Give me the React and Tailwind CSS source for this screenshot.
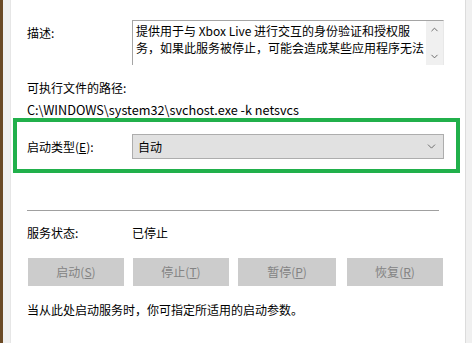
import { ChevronDown, ChevronUp } from 'lucide-react'

const FONT = { fontFamily: '"Segoe UI", "Noto Sans CJK SC", "Noto Sans", sans-serif' }

function Btn({ label, k, width }) {
  return (
    <div className={`h-[28px] ${width} bg-[#cccccc] text-[#838383] text-[12px] flex items-center justify-center`}>
      {label}(<span className="underline">{k}</span>)
    </div>
  )
}

export default function App() {
  return (
    <div className="w-[472px] h-[343px] flex bg-white overflow-hidden text-[12px] text-black" style={FONT}>
      <div className="w-[3px] bg-[#6b4a26]" />
      <div className="w-[8px] bg-[#f0f0f0] border-r border-[#e6e6e6]" />

      <div className="flex-1 flex flex-col bg-white">
        {/* description */}
        <div className="flex pl-[16px] pt-[20px]">
          <div className="w-[105px] pt-[5px] leading-[16px]">描述:</div>
          <div className="w-[312px] h-[45px] flex border-t border-l border-[#a5a5a5] border-r border-r-[#e8e8e8]">
            <div className="flex-1 px-[3px] pt-[1px] leading-[17px] overflow-hidden whitespace-nowrap">
              提供用于与 Xbox Live 进行交互的身份验证和授权服
              <br />
              务，如果此服务被停止，可能会造成某些应用程序无法
            </div>
            <div className="w-[17px] bg-[#f0f0f0] flex flex-col items-center justify-between py-[3px] text-[#606060]">
              <ChevronUp size={11} strokeWidth={2} />
              <ChevronDown size={11} strokeWidth={2} />
            </div>
          </div>
        </div>

        <div className="pl-[16px] mt-[15px] leading-[16px]">可执行文件的路径:</div>
        <div className="pl-[16px] mt-[6px] leading-[16px] text-[12.7px]">C:\WINDOWS\system32\svchost.exe -k netsvcs</div>

        {/* startup type, highlighted */}
        <div className="ml-[2px] w-[447px] h-[55px] border-4 border-[#21b04b] flex items-start pl-[10px] pt-[12px]">
          <div className="w-[105px] leading-[25px]">
            启动类型(<span className="underline">E</span>):
          </div>
          <div className="w-[312px] h-[25px] bg-[#e1e1e1] border border-[#adadad] flex items-center justify-between px-[5px]">
            <span>自动</span>
            <ChevronDown size={13} strokeWidth={1.5} className="text-[#555]" />
          </div>
        </div>

        <div className="ml-[16px] w-[412px] mt-[37px] h-px bg-[#a0a0a0]" />

        <div className="flex pl-[16px] mt-[14px] leading-[16px]">
          <div className="w-[105px]">服务状态:</div>
          <div>已停止</div>
        </div>

        <div className="flex pl-[17px] mt-[17px] gap-[9px]">
          <Btn label="启动" k="S" width="w-[96px]" />
          <Btn label="停止" k="T" width="w-[96px]" />
          <div className="w-[98px]">
            <Btn label="暂停" k="P" width="w-[98px]" />
          </div>
          <div className="ml-[2px]">
            <Btn label="恢复" k="R" width="w-[96px]" />
          </div>
        </div>

        <div className="pl-[16px] mt-[16px] leading-[16px]">当从此处启动服务时，你可指定所适用的启动参数。</div>
      </div>

      <div className="w-[7px] bg-[#f0f0f0] border-l border-[#dcdcdc]" />
    </div>
  )
}
